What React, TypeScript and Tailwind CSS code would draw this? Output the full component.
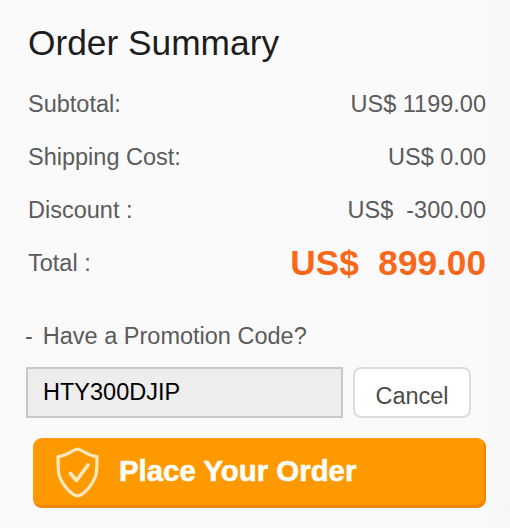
import React from "react";

type SummaryRow = {
  label: string;
  amount: string;
};

const rows: SummaryRow[] = [
  { label: "Subtotal:", amount: "US$ 1199.00" },
  { label: "Shipping Cost:", amount: "US$ 0.00" },
  { label: "Discount :", amount: "US$  -300.00" },
];

const ShieldIcon: React.FC = () => (
  <svg
    className="h-[52px] w-[46px] shrink-0"
    viewBox="0 0 46 52"
    fill="none"
    stroke="#ffe9bd"
    strokeWidth="3.2"
    strokeLinecap="round"
    strokeLinejoin="round"
  >
    <path d="M22.5 2C17 3 12.5 9 3 9.5C3.5 17 2.5 23 4.5 29.5C7.5 37.5 15.5 47.5 22.5 49C29.5 47.5 37.5 37.5 40.5 29.5C42.5 23 41.5 17 42 9.5C32.5 9 28 3 22.5 2Z" />
    <path d="M15.5 26.5L21.5 33.5L33 18" strokeWidth="3.6" />
  </svg>
);

const App: React.FC = () => {
  return (
    <div className="h-[528px] w-[510px] overflow-hidden bg-[#fafafa] bg-linear-to-r from-[#fafafa] from-95% to-[#f6f6f6] pl-7 pr-6 pt-[22px] font-['Liberation_Sans',Arial,sans-serif] text-[23.5px] text-[#5b5b5b]">
      <h1 className="h-[56px] text-[35.3px] leading-[42px] text-[#1d1d1d]">
        Order Summary
      </h1>
      <dl>
        {rows.map((row) => (
          <div key={row.label} className="flex h-[53px] items-center justify-between">
            <dt>{row.label}</dt>
            <dd className="whitespace-pre">{row.amount}</dd>
          </div>
        ))}
        <div className="flex h-[53px] items-center justify-between">
          <dt>Total :</dt>
          <dd className="whitespace-pre text-[35.2px] font-bold text-[#f9681a]">
            US$  899.00
          </dd>
        </div>
      </dl>
      <div className="-ml-[3px] mt-[30px] flex h-[34px] items-center gap-2.5">
        <span>-</span>
        <span>Have a Promotion Code?</span>
      </div>
      <div className="-ml-[2px] mt-[13px] flex gap-2.5">
        <input
          className="h-[51px] w-[317px] border-2 border-[#c8c8c8] bg-[#ededed] pl-[15px] text-black outline-none"
          defaultValue="HTY300DJIP"
        />
        <button className="h-[51px] w-[118px] rounded-lg border-2 border-[#dcdcdc] bg-white pt-2 text-[#4c4c4c]">
          Cancel
        </button>
      </div>
      <button className="ml-[5px] mt-[20px] flex h-[70px] w-[453px] items-center rounded-[9px] bg-[#ff9900] pl-[22px] text-[29.4px] font-bold text-[#fffdf8] shadow-[inset_-2px_-3px_1px_#ec870c]">
        <ShieldIcon />
        <span className="ml-[18px] pb-[3px] [-webkit-text-stroke:0.6px_#fffdf8]">
          Place Your Order
        </span>
      </button>
    </div>
  );
};

export default App;
